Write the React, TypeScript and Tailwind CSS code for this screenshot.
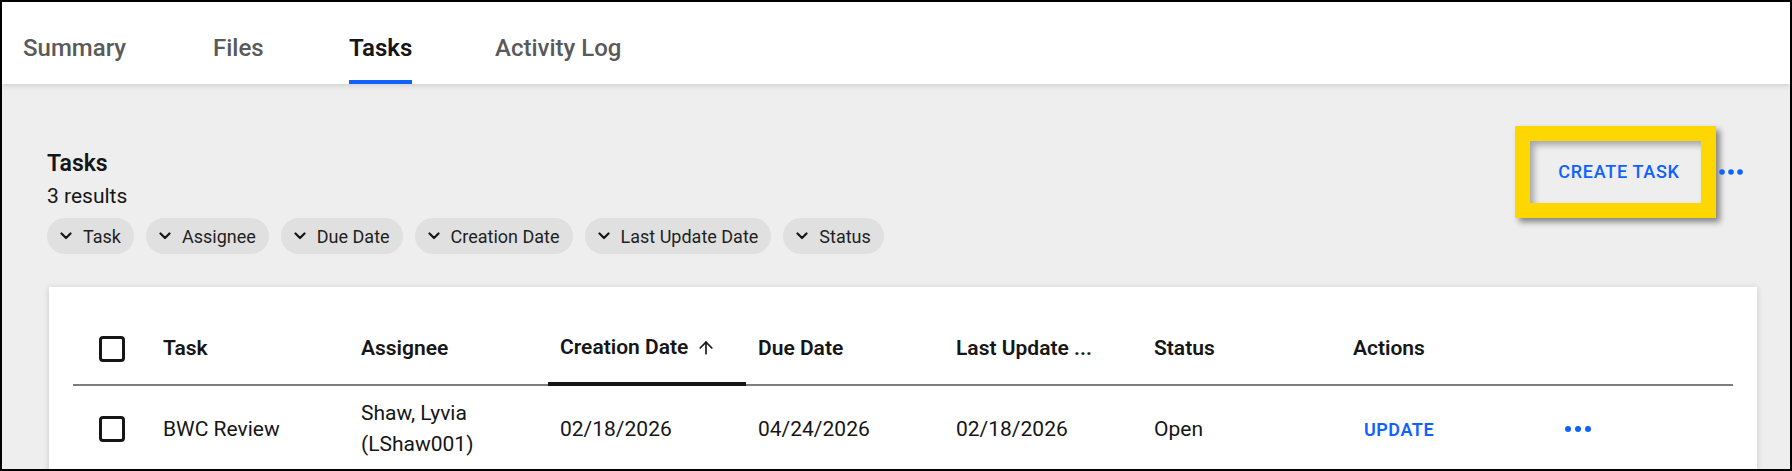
import React from 'react';
import { ArrowUp } from 'lucide-react';

const tabs = [
  { label: 'Summary', slot: 'w-[190px]', active: false },
  { label: 'Files', slot: 'w-[136px]', active: false },
  { label: 'Tasks', slot: 'w-[146px]', active: true },
  { label: 'Activity Log', slot: 'w-auto', active: false },
];

const filters = ['Task', 'Assignee', 'Due Date', 'Creation Date', 'Last Update Date', 'Status'];

function Dots({ big }: { big?: boolean }) {
  return big ? (
    <svg width="28" height="8" viewBox="0 0 28 8" className="text-[#0f62fe]">
      <circle cx="4" cy="4" r="3" fill="currentColor" />
      <circle cx="14" cy="4" r="3" fill="currentColor" />
      <circle cx="24" cy="4" r="3" fill="currentColor" />
    </svg>
  ) : (
    <svg width="24" height="8" viewBox="0 0 24 8" className="text-[#0f62fe]">
      <circle cx="3" cy="4" r="2.8" fill="currentColor" />
      <circle cx="12" cy="4" r="2.8" fill="currentColor" />
      <circle cx="21" cy="4" r="2.8" fill="currentColor" />
    </svg>
  );
}

function Chevron() {
  return (
    <svg width="12" height="8" viewBox="0 0 12 8" fill="none" className="shrink-0">
      <path d="M1.5 1.5 6 6l4.5-4.5" stroke="#161616" strokeWidth="2.2" strokeLinecap="round" strokeLinejoin="round" />
    </svg>
  );
}

function Checkbox() {
  return <span className="block w-[26px] h-[26px] border-[3px] border-[#161616] rounded-[4px] bg-white" />;
}

export default function App() {
  const headCell = 'h-[72px] flex items-center pl-[12px] border-b-2 border-[#7d7d7d] font-semibold';
  const bodyCell = 'py-[12px] pl-[12px] flex items-center leading-[31px]';

  return (
    <div className="w-[1792px] h-[471px] overflow-hidden border-2 border-black bg-[#eeeeee] text-[#161616] font-['Roboto','Liberation_Sans',sans-serif]">
      {/* Tabs */}
      <nav className="relative z-10 h-[82px] bg-white flex pl-[21px] shadow-[0_2px_5px_rgba(0,0,0,0.12)]">
        {tabs.map((t) => (
          <div key={t.label} className={`${t.slot} h-full flex`}>
            <span
              className={
                t.active
                  ? 'h-full flex items-center pt-[14px] border-b-4 border-[#0f62fe] text-[24px] font-semibold text-[#161616]'
                  : 'h-full flex items-center pt-[14px] border-b-4 border-transparent text-[24px] font-medium text-[#5a5a5a]'
              }
            >
              {t.label}
            </span>
          </div>
        ))}
      </nav>

      <div className="pl-[45px] pr-[33px]">
        {/* Heading row */}
        <div className="flex justify-between items-start">
          <div className="pt-[65px]">
            <h2 className="text-[23px] leading-[30px] font-semibold">Tasks</h2>
            <p className="mt-[2px] text-[21px] leading-[30px]">3 results</p>
            <div className="mt-[7px] flex gap-[12px]">
              {filters.map((f) => (
                <button
                  key={f}
                  className="h-[36px] rounded-full bg-[#e0e0e0] pl-[13px] pr-[13px] flex items-center gap-[11px] text-[18px] text-[#1f1f1f]"
                >
                  <Chevron />
                  {f}
                </button>
              ))}
            </div>
          </div>
          <div className="pt-[42px] mr-[14px] flex items-center gap-[3px]">
            <button className="w-[201px] h-[92px] border-[15px] border-[#ffd700] flex items-center justify-center text-[18px] font-medium tracking-[0.7px] text-[#0f62fe] shadow-[4px_4px_6px_rgba(0,0,0,0.45),inset_4px_4px_6px_rgba(0,0,0,0.3)]">
              <span className="pl-[7px] -mt-[1px]">CREATE TASK</span>
            </button>
            <Dots />
          </div>
        </div>

        {/* Table card */}
        <div className="mt-[33px] ml-[2px] bg-white px-[24px] pt-[27px] shadow-[0_1px_6px_rgba(0,0,0,0.16)] text-[21px]">
          <div className="grid grid-cols-[78px_198px_199px_198px_198px_198px_199px_1fr]">
            <div className="h-[72px] flex items-center pl-[26px] border-b-2 border-[#7d7d7d]">
              <Checkbox />
            </div>
            <div className={headCell}>Task</div>
            <div className={headCell}>Assignee</div>
            <div className="h-[72px] flex items-center pl-[12px] border-b-4 border-[#161616] font-semibold gap-[8px]">
              Creation Date
              <ArrowUp size={20} strokeWidth={2} />
            </div>
            <div className={headCell}>Due Date</div>
            <div className={headCell}>Last Update ...</div>
            <div className={headCell}>Status</div>
            <div className={headCell}>Actions</div>

            <div className="py-[12px] pl-[26px] flex items-center">
              <Checkbox />
            </div>
            <div className={bodyCell}>BWC Review</div>
            <div className={bodyCell}>
              <div>
                <div>Shaw, Lyvia</div>
                <div>(LShaw001)</div>
              </div>
            </div>
            <div className={bodyCell}>02/18/2026</div>
            <div className={bodyCell}>04/24/2026</div>
            <div className={bodyCell}>02/18/2026</div>
            <div className={bodyCell}>Open</div>
            <div className="py-[12px] pl-[12px] flex items-center">
              <span className="w-[211px] pl-[11px] text-[18px] font-semibold tracking-[0.5px] text-[#0f62fe]">UPDATE</span>
              <Dots big />
            </div>
          </div>
        </div>
      </div>
    </div>
  );
}
